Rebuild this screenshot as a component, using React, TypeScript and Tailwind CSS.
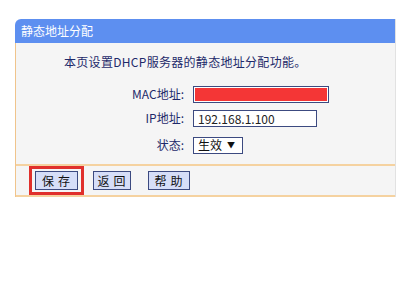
const font = { fontFamily: '"Noto Sans CJK SC", "DejaVu Sans", sans-serif' };

function Field({ label, children }: { label: string; children: React.ReactNode }) {
  return (
    <div className="flex items-center">
      <div className="w-[177px] pr-[9px] text-right text-[12px] text-[#1e2a6a]">{label}</div>
      {children}
    </div>
  );
}

export default function App() {
  return (
    <div className="w-[400px] h-[292px] bg-white pt-[19px] pl-[15px]" style={font}>
      <div className="w-[381px] border-r border-[#e2e2e2]">
        <div className="h-[24px] rounded-tl-[6px] bg-[#5d8ff0] pl-[6px] flex items-center text-[12px] text-white">
          静态地址分配
        </div>
        <div className="border-l border-[#f0c48c] bg-[#f5f5f5]">
          <div className="h-[121px] flex flex-col">
            <div className="pl-[48px] pt-[10px] h-[42px] text-[12px] text-[#1e2a6a] tracking-[0.3px]">
              本页设置DHCP服务器的静态地址分配功能。
            </div>
            <div className="flex flex-col gap-[6px]">
              <Field label="MAC地址:">
                <div className="w-[136px] h-[17px] border border-[#3c4a80] bg-white p-[1px]">
                  <div className="h-full bg-[#f43636]" />
                </div>
              </Field>
              <Field label="IP地址:">
                <div className="w-[124px] h-[17px] border border-[#3c4a80] bg-white pl-[4px] text-[12px] leading-[15px] text-[#222]">
                  192.168.1.100
                </div>
              </Field>
              <div className="mt-[3px]">
                <Field label="状态:">
                  <div className="w-[50px] h-[17px] border border-[#3c4a80] bg-white pl-[4px] flex items-center text-[12px] text-[#111]">
                    生效<span className="ml-[5px] text-[8px]">▼</span>
                  </div>
                </Field>
              </div>
            </div>
          </div>
          <div className="border-t-2 border-b-2 border-[#f5d2a0] h-[33px] flex items-center pl-[13px]">
            <div className="border-[3px] border-[#e0302c] px-[3px] py-[2px] flex">
              <button className="w-[43px] h-[19px] border border-[#3c4a80] bg-[#d6def8] text-[12px] tracking-[4px] text-[#111] leading-none pl-[3px]">
                保存
              </button>
            </div>
            <button className="ml-[9px] w-[38px] h-[19px] border border-[#3c4a80] bg-[#d6def8] text-[12px] tracking-[4px] text-[#111] leading-none pl-[3px]">
              返回
            </button>
            <button className="ml-[17px] w-[42px] h-[19px] border border-[#3c4a80] bg-[#d6def8] text-[12px] tracking-[4px] text-[#111] leading-none pl-[3px]">
              帮助
            </button>
          </div>
        </div>
      </div>
    </div>
  );
}
